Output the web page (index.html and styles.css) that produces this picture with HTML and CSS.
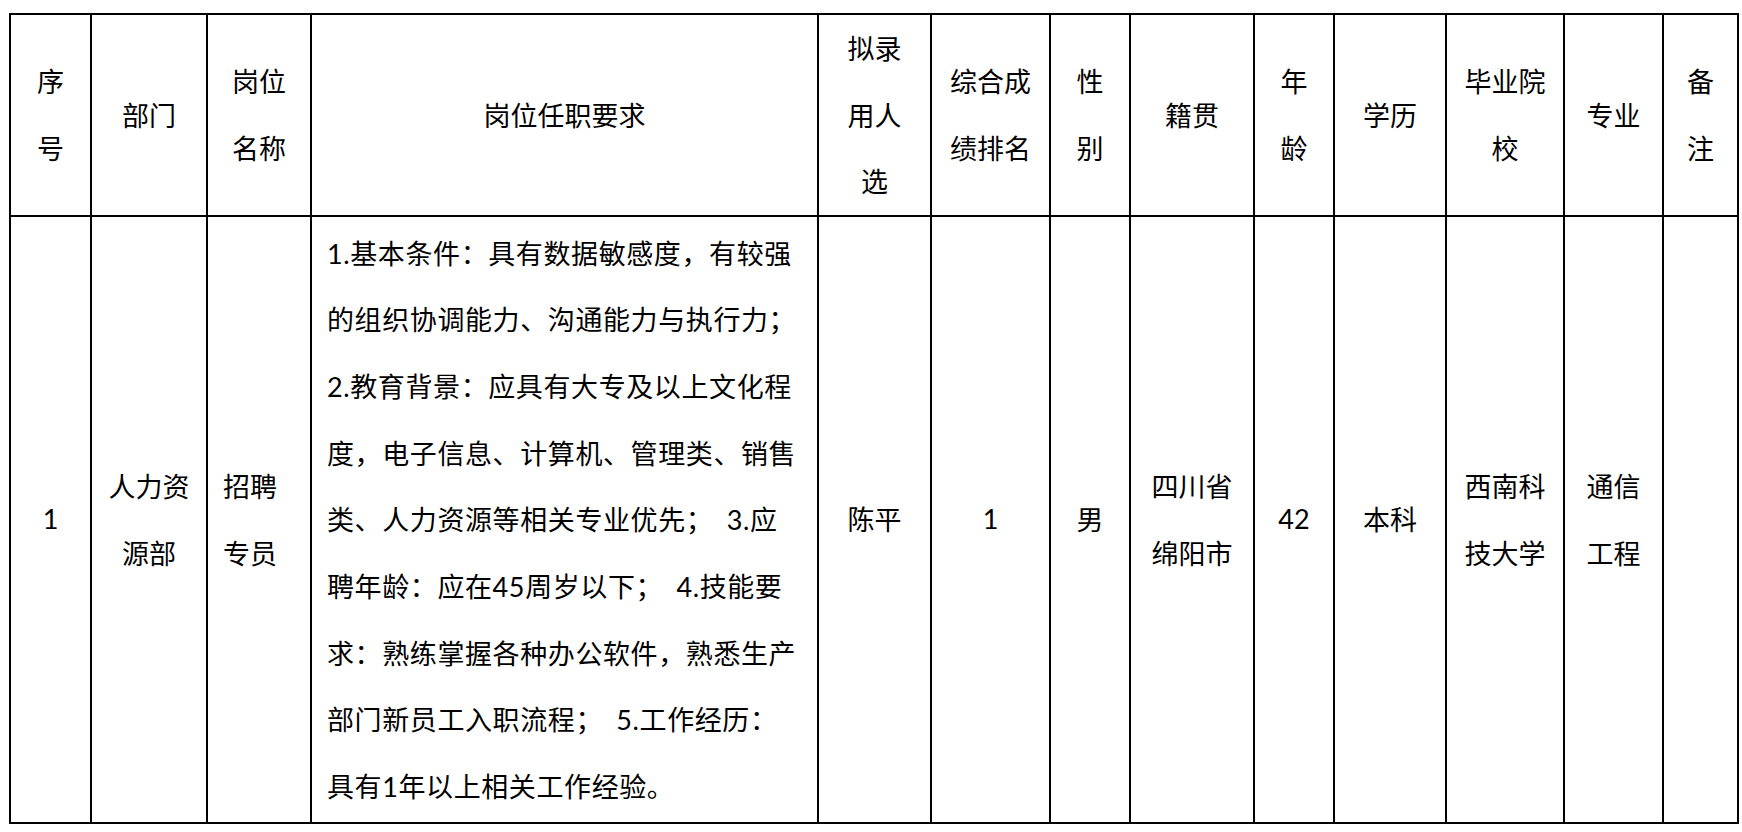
FILE: index.html
```html
<!DOCTYPE html>
<html lang="zh-CN">
<head>
<meta charset="utf-8">
<title>拟录用人员公示</title>
<link rel="stylesheet" href="styles.css">
</head>
<body>
<table class="sheet">
  <colgroup>
    <col class="c-no">
    <col class="c-dept">
    <col class="c-post">
    <col class="c-req">
    <col class="c-name">
    <col class="c-rank">
    <col class="c-sex">
    <col class="c-origin">
    <col class="c-age">
    <col class="c-edu">
    <col class="c-school">
    <col class="c-major">
    <col class="c-note">
  </colgroup>
  <thead>
    <tr class="head-row">
      <th>序<br>号</th>
      <th>部门</th>
      <th>岗位<br>名称</th>
      <th>岗位任职要求</th>
      <th>拟录<br>用人<br>选</th>
      <th>综合成<br>绩排名</th>
      <th>性<br>别</th>
      <th>籍贯</th>
      <th>年<br>龄</th>
      <th>学历</th>
      <th>毕业院<br>校</th>
      <th>专业</th>
      <th>备<br>注</th>
    </tr>
  </thead>
  <tbody>
    <tr class="body-row">
      <td class="num">1</td>
      <td>人力资<br>源部</td>
      <td class="post">招聘<br>专员</td>
      <td class="req">
        <div class="line"><span class="lat">1.</span>基本条件：具有数据敏感度，有较强</div>
        <div class="line">的组织协调能力、沟通能力与执行力；</div>
        <div class="line"><span class="lat">2.</span>教育背景：应具有大专及以上文化程</div>
        <div class="line">度，电子信息、计算机、管理类、销售</div>
        <div class="line">类、人力资源等相关专业优先；&nbsp;&nbsp;<span class="lat">3.</span>应</div>
        <div class="line">聘年龄：应在<span class="lat">45</span>周岁以下；&nbsp;&nbsp;<span class="lat">4.</span>技能要</div>
        <div class="line">求：熟练掌握各种办公软件，熟悉生产</div>
        <div class="line">部门新员工入职流程；&nbsp;&nbsp;<span class="lat">5.</span>工作经历：</div>
        <div class="line">具有<span class="lat">1</span>年以上相关工作经验。</div>
      </td>
      <td>陈平</td>
      <td class="num">1</td>
      <td>男</td>
      <td>四川省<br>绵阳市</td>
      <td class="num">42</td>
      <td>本科</td>
      <td>西南科<br>技大学</td>
      <td>通信<br>工程</td>
      <td></td>
    </tr>
  </tbody>
</table>
</body>
</html>
```

FILE: styles.css
```css
html, body {
  margin: 0;
  padding: 0;
  background: #ffffff;
}

body {
  padding: 13px 0 0 9px;
  font-family: "Noto Sans CJK SC", "Noto Sans", sans-serif;
  color: #000000;
}

.sheet {
  border-collapse: collapse;
  table-layout: fixed;
  width: 1729px;
  border: 2px solid #000000;
}

.sheet th,
.sheet td {
  border: 2px solid #000000;
  padding: 0;
  text-align: center;
  vertical-align: middle;
  font-size: 27px;
  line-height: 66.7px;
  font-weight: 400;
  white-space: nowrap;
  overflow: hidden;
}

.c-no { width: 81px; }
.c-dept { width: 116px; }
.c-post { width: 104px; }
.c-req { width: 507px; }
.c-name { width: 113px; }
.c-rank { width: 119px; }
.c-sex { width: 80px; }
.c-origin { width: 124px; }
.c-age { width: 80px; }
.c-edu { width: 112px; }
.c-school { width: 118px; }
.c-major { width: 99px; }
.c-note { width: 75px; }

.head-row {
  height: 201px;
}

.body-row {
  height: 607px;
}

.sheet td.post {
  text-align: left;
  padding-left: 15px;
}

.sheet td.req {
  text-align: left;
  padding-left: 15px;
}

.line {
  height: 66.7px;
  letter-spacing: 0.6px;
}

.lat,
.num {
  font-family: "Lato", "Open Sans", "Noto Sans CJK SC", sans-serif;
}
```
